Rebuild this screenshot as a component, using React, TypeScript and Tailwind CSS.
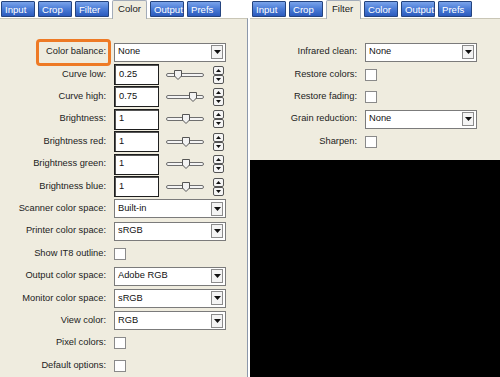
const font = { fontFamily: '"Liberation Sans", Arial, sans-serif' };

const leftTabs = ["Input", "Crop", "Filter", "Color", "Output", "Prefs"];

function Tabs({ active }: { active: string }) {
  return (
    <div className="flex items-start gap-[3px] pl-[1px] h-[18px] bg-white">
      {leftTabs.map((t) =>
        t === active ? (
          <div
            key={t}
            className="relative z-10 h-[19px] w-[35px] rounded-t-[2px] border border-b-0 border-[#a3acb9] bg-[#efecdf] pl-[5px] pt-[1px] text-[9.6px] leading-[13px] text-[#222]"
          >
            {t}
          </div>
        ) : (
          <div
            key={t}
            className="mt-[1px] h-[16px] w-[34px] rounded-t-[1px] border border-[#24447f] bg-gradient-to-b from-[#7aa3ea] via-[#4a7bd6] to-[#2c5bbd] pl-[3px] pt-[1px] text-[9.6px] leading-[13px] text-white"
          >
            {t}
          </div>
        )
      )}
    </div>
  );
}

function Row({ label, children }: { label: string; children: React.ReactNode }) {
  return (
    <div className="grid h-[22.4px] grid-cols-[106px_1fr] items-center">
      <div className="text-right text-[9.3px] text-[#222]">{label}</div>
      <div className="flex items-center pl-[8px]">{children}</div>
    </div>
  );
}

function Select({ value }: { value: string }) {
  return (
    <div className="flex h-[19px] w-[112px] items-center justify-between border border-[#7b7b7b] bg-white pl-[3px] pr-[2px] text-[9.3px] text-[#111]">
      <span>{value}</span>
      <div className="flex h-[14px] w-[12px] items-center justify-center border border-[#8c8c8c] bg-[#f4f4f4]">
        <svg width="7" height="4" viewBox="0 0 7 4">
          <path d="M0 0h7L3.5 4z" fill="#111" />
        </svg>
      </div>
    </div>
  );
}

function Check() {
  return <div className="h-[12px] w-[12px] border border-[#8a8a8a] bg-white" />;
}

function Slider({ pos }: { pos: number }) {
  return (
    <svg width="38" height="12" viewBox="0 0 38 12" className="ml-[7px]">
      <rect x="0.5" y="4.5" width="37" height="3" rx="1.5" fill="#f4f4f4" stroke="#6f6f6f" />
      <path
        d={`M${pos - 3.5} 1.5h7v5.5l-3.5 3.5l-3.5-3.5z`}
        fill="#f2f2f2"
        stroke="#555"
      />
    </svg>
  );
}

function Spinner() {
  return (
    <svg width="11" height="18" viewBox="0 0 11 18" className="ml-[9px]">
      <rect x="0.5" y="0.5" width="10" height="8" rx="1.5" fill="#f5f5f5" stroke="#555" />
      <rect x="0.5" y="9.5" width="10" height="8" rx="1.5" fill="#f5f5f5" stroke="#555" />
      <path d="M3 6h5L5.5 3z" fill="#111" />
      <path d="M3 12h5l-2.5 3z" fill="#111" />
    </svg>
  );
}

function NumField({ value, pos }: { value: string; pos: number }) {
  return (
    <>
      <div className="flex h-[21px] w-[45px] items-center border border-[#1e1e1e] bg-white pl-[4px] text-[9.3px] text-[#111] shadow-[inset_1px_1px_0_#555]">
        {value}
      </div>
      <Slider pos={pos} />
      <Spinner />
    </>
  );
}

export default function App() {
  return (
    <div className="flex h-[377px] w-[500px] overflow-hidden bg-white" style={font}>
      {/* Color panel */}
      <div className="flex w-[250px] flex-col">
        <Tabs active="Color" />
        <div className="mr-[2px] flex-1 border-t border-r border-t-[#c9c6b6] border-r-[#8c98ab] bg-[#efecdf] pt-[22px]">
          <div className="relative">
            <div className="absolute left-[36px] top-[-2px] h-[27px] w-[75px] rounded-[4px] border-[3px] border-[#ee7a25]" />
            <Row label="Color balance:">
              <Select value="None" />
            </Row>
          </div>
          <Row label="Curve low:">
            <NumField value="0.25" pos={12} />
          </Row>
          <Row label="Curve high:">
            <NumField value="0.75" pos={27} />
          </Row>
          <Row label="Brightness:">
            <NumField value="1" pos={20} />
          </Row>
          <Row label="Brightness red:">
            <NumField value="1" pos={20} />
          </Row>
          <Row label="Brightness green:">
            <NumField value="1" pos={20} />
          </Row>
          <Row label="Brightness blue:">
            <NumField value="1" pos={20} />
          </Row>
          <Row label="Scanner color space:">
            <Select value="Built-in" />
          </Row>
          <Row label="Printer color space:">
            <Select value="sRGB" />
          </Row>
          <Row label="Show IT8 outline:">
            <Check />
          </Row>
          <Row label="Output color space:">
            <Select value="Adobe RGB" />
          </Row>
          <Row label="Monitor color space:">
            <Select value="sRGB" />
          </Row>
          <Row label="View color:">
            <Select value="RGB" />
          </Row>
          <Row label="Pixel colors:">
            <Check />
          </Row>
          <Row label="Default options:">
            <Check />
          </Row>
        </div>
      </div>

      {/* Filter panel */}
      <div className="flex w-[250px] flex-col">
        <div className="pl-[1px]">
          <Tabs active="Filter" />
        </div>
        <div className="h-[142px] border-t border-[#c9c6b6] bg-[#efecdf] pl-[1px] pt-[22px]">
          <Row label="Infrared clean:">
            <Select value="None" />
          </Row>
          <Row label="Restore colors:">
            <Check />
          </Row>
          <Row label="Restore fading:">
            <Check />
          </Row>
          <Row label="Grain reduction:">
            <Select value="None" />
          </Row>
          <Row label="Sharpen:">
            <Check />
          </Row>
        </div>
        <div className="flex-1 bg-black" />
      </div>
    </div>
  );
}
